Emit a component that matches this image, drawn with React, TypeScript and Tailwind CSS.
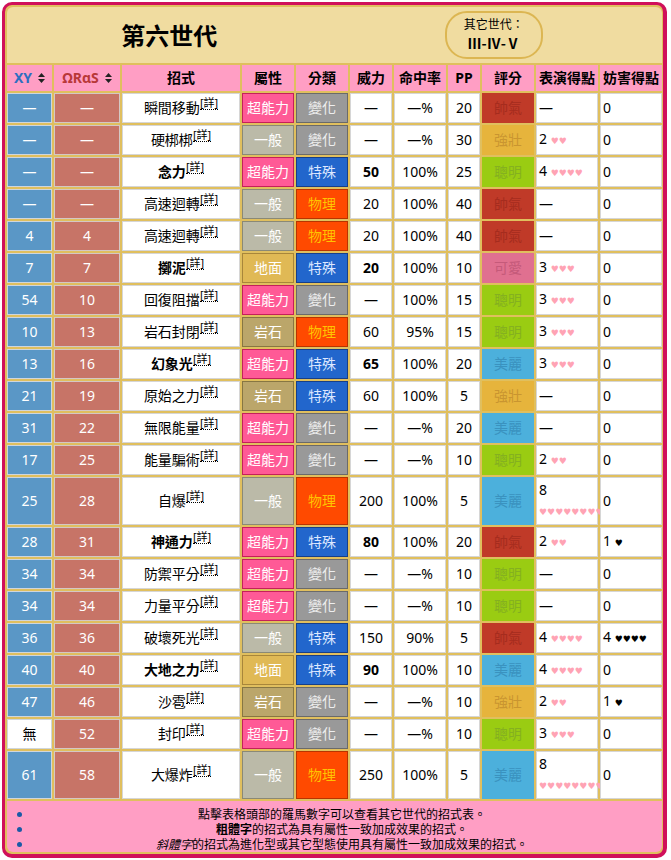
import React from 'react';

type Row = {
  xy: string;
  or: string;
  name: string;
  bold?: boolean;
  type: string;
  cat: string;
  pow: string;
  acc: string;
  pp: string;
  rate: string;
  appeal: number | null;
  jam: number;
  tall?: boolean;
};

const rows: Row[] = [
  { xy: '—', or: '—', name: '瞬間移動', type: '超能力', cat: '變化', pow: '—', acc: '—%', pp: '20', rate: '帥氣', appeal: null, jam: 0 },
  { xy: '—', or: '—', name: '硬梆梆', type: '一般', cat: '變化', pow: '—', acc: '—%', pp: '30', rate: '強壯', appeal: 2, jam: 0 },
  { xy: '—', or: '—', name: '念力', bold: true, type: '超能力', cat: '特殊', pow: '50', acc: '100%', pp: '25', rate: '聰明', appeal: 4, jam: 0 },
  { xy: '—', or: '—', name: '高速迴轉', type: '一般', cat: '物理', pow: '20', acc: '100%', pp: '40', rate: '帥氣', appeal: null, jam: 0 },
  { xy: '4', or: '4', name: '高速迴轉', type: '一般', cat: '物理', pow: '20', acc: '100%', pp: '40', rate: '帥氣', appeal: null, jam: 0 },
  { xy: '7', or: '7', name: '擲泥', bold: true, type: '地面', cat: '特殊', pow: '20', acc: '100%', pp: '10', rate: '可愛', appeal: 3, jam: 0 },
  { xy: '54', or: '10', name: '回復阻擋', type: '超能力', cat: '變化', pow: '—', acc: '100%', pp: '15', rate: '聰明', appeal: 3, jam: 0 },
  { xy: '10', or: '13', name: '岩石封閉', type: '岩石', cat: '物理', pow: '60', acc: '95%', pp: '15', rate: '聰明', appeal: 3, jam: 0 },
  { xy: '13', or: '16', name: '幻象光', bold: true, type: '超能力', cat: '特殊', pow: '65', acc: '100%', pp: '20', rate: '美麗', appeal: 3, jam: 0 },
  { xy: '21', or: '19', name: '原始之力', type: '岩石', cat: '特殊', pow: '60', acc: '100%', pp: '5', rate: '強壯', appeal: null, jam: 0 },
  { xy: '31', or: '22', name: '無限能量', type: '超能力', cat: '變化', pow: '—', acc: '—%', pp: '20', rate: '美麗', appeal: null, jam: 0 },
  { xy: '17', or: '25', name: '能量騙術', type: '超能力', cat: '變化', pow: '—', acc: '—%', pp: '10', rate: '聰明', appeal: 2, jam: 0 },
  { xy: '25', or: '28', name: '自爆', type: '一般', cat: '物理', pow: '200', acc: '100%', pp: '5', rate: '美麗', appeal: 8, jam: 0, tall: true },
  { xy: '28', or: '31', name: '神通力', bold: true, type: '超能力', cat: '特殊', pow: '80', acc: '100%', pp: '20', rate: '帥氣', appeal: 2, jam: 1 },
  { xy: '34', or: '34', name: '防禦平分', type: '超能力', cat: '變化', pow: '—', acc: '—%', pp: '10', rate: '聰明', appeal: null, jam: 0 },
  { xy: '34', or: '34', name: '力量平分', type: '超能力', cat: '變化', pow: '—', acc: '—%', pp: '10', rate: '聰明', appeal: null, jam: 0 },
  { xy: '36', or: '36', name: '破壞死光', type: '一般', cat: '特殊', pow: '150', acc: '90%', pp: '5', rate: '帥氣', appeal: 4, jam: 4 },
  { xy: '40', or: '40', name: '大地之力', bold: true, type: '地面', cat: '特殊', pow: '90', acc: '100%', pp: '10', rate: '美麗', appeal: 4, jam: 0 },
  { xy: '47', or: '46', name: '沙雹', type: '岩石', cat: '變化', pow: '—', acc: '—%', pp: '10', rate: '強壯', appeal: 2, jam: 1 },
  { xy: '無', or: '52', name: '封印', type: '超能力', cat: '變化', pow: '—', acc: '—%', pp: '10', rate: '聰明', appeal: 3, jam: 0 },
  { xy: '61', or: '58', name: '大爆炸', type: '一般', cat: '物理', pow: '250', acc: '100%', pp: '5', rate: '美麗', appeal: 8, jam: 0, tall: true },
];

const typeCls: Record<string, string> = {
  超能力: 'bg-[#ff5a96] border-[#c4205a] text-white',
  一般: 'bg-[#bbbaa8] border-[#8a8976] text-white',
  地面: 'bg-[#e0b955] border-[#a8863a] text-white',
  岩石: 'bg-[#bba66a] border-[#877642] text-white',
};

const catCls: Record<string, string> = {
  變化: 'bg-[#999999] border-[#6a6a6a] text-[#eeeeee]',
  特殊: 'bg-[#2266cc] border-[#173f88] text-[#dde8ff]',
  物理: 'bg-[#ff4a00] border-[#b83400] text-[#ffc400]',
};

const rateCls: Record<string, string> = {
  帥氣: 'bg-[#c03a28] text-[#a52c1e]',
  強壯: 'bg-[#e6b43c] text-[#c99530]',
  聰明: 'bg-[#9acc12] text-[#84b020]',
  可愛: 'bg-[#e07090] text-[#c55a7a]',
  美麗: 'bg-[#4cb0dc] text-[#3a92bf]',
};

const white = 'bg-white border border-[#d6d6d6] flex items-center justify-center';

function SortIcon() {
  return (
    <svg width="7" height="10" viewBox="0 0 7 10" className="ml-[6px] inline-block">
      <path d="M3.5 0 L7 4 L0 4 Z" fill="#222" />
      <path d="M0 6 L7 6 L3.5 10 Z" fill="#222" />
    </svg>
  );
}

function Hearts({ n, black }: { n: number; black?: boolean }) {
  return (
    <span className={`font-['DejaVu_Sans',sans-serif] text-[9px] ${black ? 'text-black' : 'text-[#ffa3b4]'}`}>
      {'♥'.repeat(n)}
    </span>
  );
}

function MoveRow({ r }: { r: Row }) {
  const h = r.tall ? 'h-[48px]' : 'h-[30px]';
  return (
    <>
      <div className={`${h} flex items-center justify-center border border-[#cfd6dc] ${r.xy === '無' ? 'bg-white text-black' : 'bg-[#5a97c6] text-white'}`}>
        {r.xy}
      </div>
      <div className={`${h} flex items-center justify-center border border-[#d4c8c4] bg-[#c77467] text-white`}>{r.or}</div>
      <div className={`${h} ${white}`}>
        <span className={r.bold ? 'font-bold' : ''}>{r.name}</span>
        <span className="relative -top-[5px] inline-block border-b border-dotted border-black text-[11px] leading-[12px]">[詳]</span>
      </div>
      <div className={`${h} flex items-center justify-center border ${typeCls[r.type]}`}>{r.type}</div>
      <div className={`${h} flex items-center justify-center border ${catCls[r.cat]}`}>{r.cat}</div>
      <div className={`${h} ${white} ${r.bold ? 'font-bold' : ''}`}>{r.pow}</div>
      <div className={`${h} ${white}`}>{r.acc}</div>
      <div className={`${h} ${white}`}>{r.pp}</div>
      <div className={`${h} flex items-center justify-center ${rateCls[r.rate]}`}>{r.rate}</div>
      <div className={`${h} bg-white border border-[#d6d6d6] pl-[2px] flex flex-col justify-center`}>
        {r.appeal === null ? (
          <span>—</span>
        ) : r.tall ? (
          <>
            <span className="leading-[20px]">{r.appeal}</span>
            <span className="leading-[20px]"><Hearts n={r.appeal} /></span>
          </>
        ) : (
          <span>
            {r.appeal} <Hearts n={r.appeal} />
          </span>
        )}
      </div>
      <div className={`${h} bg-white border border-[#d6d6d6] pl-[2px] flex items-center`}>
        {r.jam === 0 ? (
          <span>0</span>
        ) : (
          <span>
            {r.jam} <Hearts n={r.jam} black />
          </span>
        )}
      </div>
    </>
  );
}

export default function App() {
  return (
    <div className="bg-white w-[671px] h-[860px] pt-[2px] pl-[2px] font-['Noto_Sans','Noto_Sans_CJK_TC',sans-serif] text-[14px] leading-[18px] text-black">
      <div className="w-[665px] rounded-[10px] border-[3px] border-r-[4px] border-b-[4px] border-[#d0105a] bg-[#e0bf5e] p-[2px]">
        <div className="grid grid-cols-[45px_66px_118px_52px_52px_42px_52px_32px_52px_62px_62px] gap-[2px]">
          {/* title */}
          <div className="col-span-11 h-[56px] bg-[#f0dca0] rounded-t-[6px] flex">
            <div className="flex-1 flex items-center justify-center">
              <span className="text-[24px] font-bold leading-[30px] pt-[2px]">第六世代</span>
            </div>
            <div className="flex-1 flex items-center justify-center pr-[6px]">
              <div className="w-[98px] h-[48px] rounded-[22px] border-2 border-[#dcb652] flex flex-col items-center justify-center">
                <span className="text-[12px] leading-[16px]">其它世代：</span>
                <span className="font-['Noto_Sans_CJK_TC',sans-serif] text-[14px] font-bold leading-[20px]">Ⅲ-Ⅳ-Ⅴ</span>
              </div>
            </div>
          </div>

          {/* header */}
          <div className="h-[26px] bg-[#ff9ec4] flex items-center justify-center font-bold text-[#2f6fc0]">
            XY<SortIcon />
          </div>
          <div className="h-[26px] bg-[#ff9ec4] flex items-center justify-center font-bold text-[#b83838]">
            ΩRαS<SortIcon />
          </div>
          {['招式', '屬性', '分類', '威力', '命中率', 'PP', '評分', '表演得點', '妨害得點'].map((t) => (
            <div key={t} className="h-[26px] bg-[#ff9ec4] flex items-center justify-center font-bold whitespace-nowrap">
              {t}
            </div>
          ))}

          {rows.map((r, i) => (
            <MoveRow key={i} r={r} />
          ))}

          {/* footer */}
          <div className="col-span-11 h-[51px] bg-[#ff9ec4] rounded-b-[6px] pt-[6px] text-[12px] leading-[15px]">
            {[
              <>點擊表格頭部的羅馬數字可以查看其它世代的招式表。</>,
              <>
                <b>粗體字</b>的招式為具有屬性一致加成效果的招式。
              </>,
              <>
                <i>斜體字</i>的招式為進化型或其它型態使用具有屬性一致加成效果的招式。
              </>,
            ].map((t, i) => (
              <div key={i} className="flex items-center">
                <div className="w-[15px] flex">
                  <span className="ml-[10px] w-[5px] h-[5px] rounded-full bg-[#1a5aa6]" />
                </div>
                <div className="flex-1 text-center">{t}</div>
              </div>
            ))}
          </div>
        </div>
      </div>
    </div>
  );
}
